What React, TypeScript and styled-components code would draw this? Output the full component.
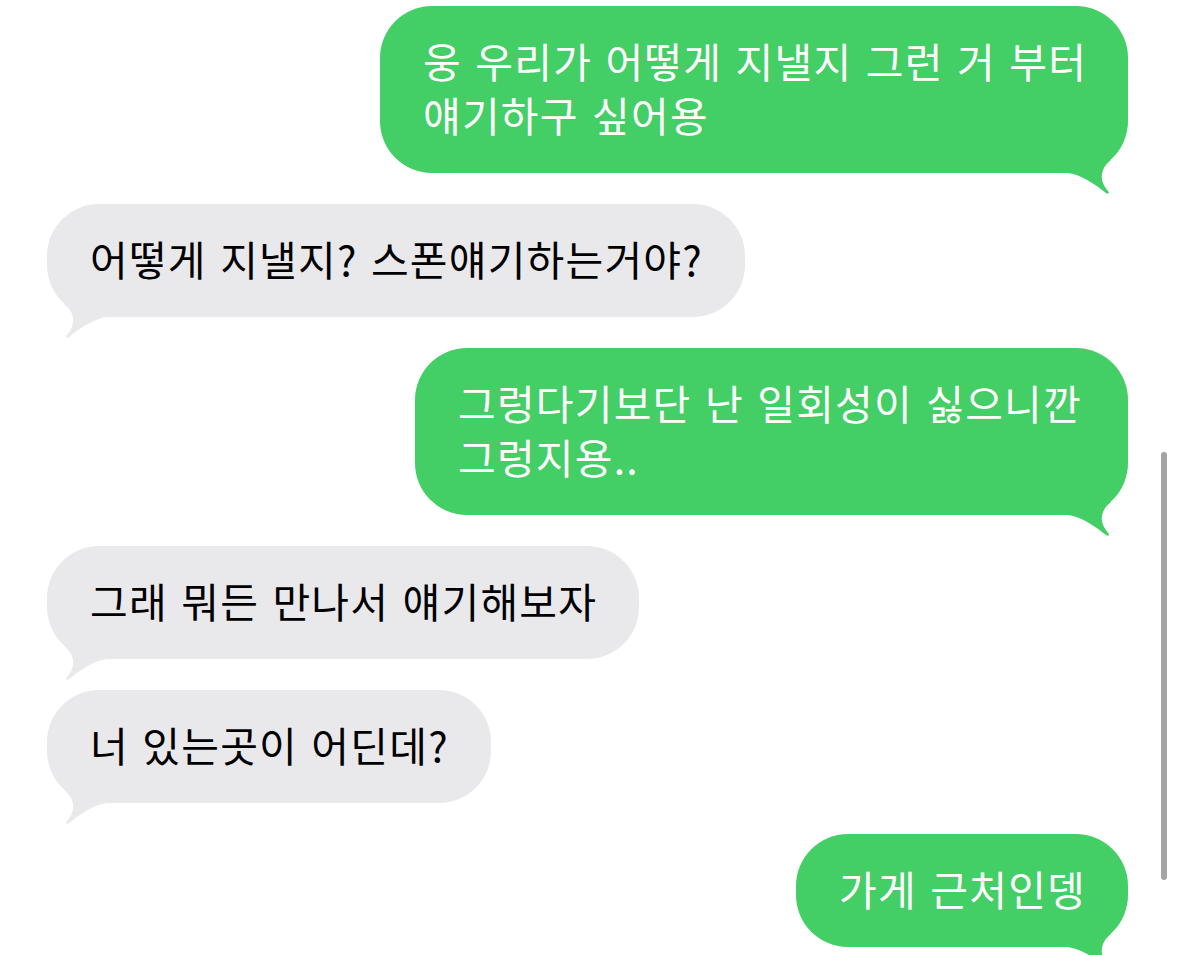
import React from 'react';
import styled, { createGlobalStyle } from 'styled-components';

type Side = 'me' | 'them';

interface Message {
  id: number;
  side: Side;
  lines: string[];
  width?: number;
}

const GREEN = '#44ce66';
const GRAY = '#e9e9eb';

const GlobalStyle = createGlobalStyle`
  html, body {
    margin: 0;
    padding: 0;
    background: #ffffff;
    overflow: hidden;
  }
  body {
    font-family: "Noto Sans CJK KR", "Noto Sans", sans-serif;
  }
`;

const Thread = styled.div`
  display: flex;
  flex-direction: column;
  gap: 31px;
  padding: 6px 51px 40px 47px;
  height: 955px;
  box-sizing: border-box;
`;

const Bubble = styled.div<{ side: Side; width?: number }>`
  position: relative;
  align-self: ${p => (p.side === 'me' ? 'flex-end' : 'flex-start')};
  width: ${p => (p.width ? `${p.width}px` : 'auto')};
  box-sizing: border-box;
  padding: 27px 42px 32px 43px;
  border-radius: 52px;
  background: ${p => (p.side === 'me' ? GREEN : GRAY)};
  color: ${p => (p.side === 'me' ? '#ffffff' : '#000000')};
  font-size: 41px;
  letter-spacing: 1.2px;
  word-spacing: 3px;
  white-space: nowrap;
`;

// one row of text per line so the wrap stays where it is in the thread
const Line = styled.div`
  position: relative;
  z-index: 1;
  height: 54px;
  line-height: 54px;
`;

const TailSvg = styled.svg<{ side: Side }>`
  position: absolute;
  bottom: -22px;
  width: 60px;
  height: 42px;
  ${p => (p.side === 'me' ? 'right: 0;' : 'left: 0; transform: scaleX(-1);')}
  fill: ${p => (p.side === 'me' ? GREEN : GRAY)};
`;

const ScrollThumb = styled.div`
  position: fixed;
  top: 452px;
  right: 12px;
  width: 6px;
  height: 428px;
  border-radius: 3px;
  background: #a4a4a4;
`;

const Tail: React.FC<{ side: Side }> = ({ side }) => (
  <TailSvg side={side} viewBox="0 0 60 42">
    <path d="M0 20 C14 22 28 32 38 40 C40 41.5 41.5 40.5 40.5 38.5 C35.5 33 33 27 34 21 C35 15 38 11 43 7 L30 0 L0 0 Z" />
  </TailSvg>
);

const messages: Message[] = [
  { id: 1, side: 'me', lines: ['웅 우리가 어떻게 지낼지 그런 거 부터', '얘기하구 싶어용'], width: 748 },
  { id: 2, side: 'them', lines: ['어떻게 지낼지? 스폰얘기하는거야?'] },
  { id: 3, side: 'me', lines: ['그렁다기보단 난 일회성이 싫으니깐', '그렁지용..'], width: 713 },
  { id: 4, side: 'them', lines: ['그래 뭐든 만나서 얘기해보자'] },
  { id: 5, side: 'them', lines: ['너 있는곳이 어딘데?'] },
  { id: 6, side: 'me', lines: ['가게 근처인뎅'] },
];

const App: React.FC = () => (
  <>
    <GlobalStyle />
    <Thread>
      {messages.map(m => (
        <Bubble key={m.id} side={m.side} width={m.width}>
          {m.lines.map((line, i) => (
            <Line key={i}>{line}</Line>
          ))}
          <Tail side={m.side} />
        </Bubble>
      ))}
    </Thread>
    <ScrollThumb />
  </>
);

export default App;
